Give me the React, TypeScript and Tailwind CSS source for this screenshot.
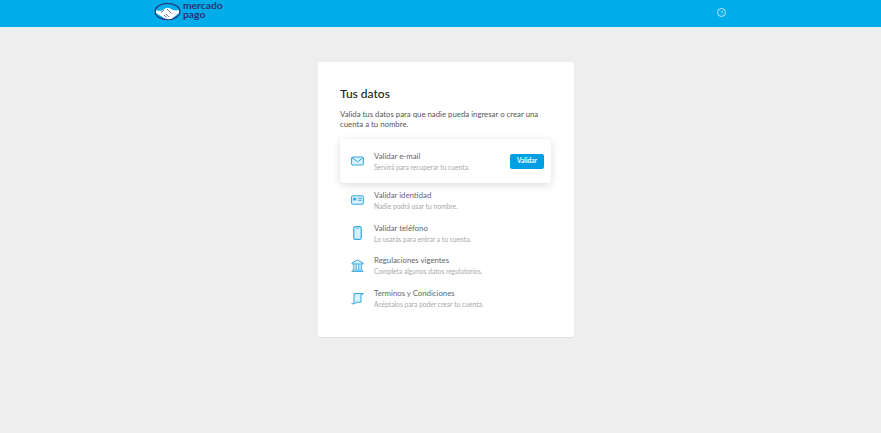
import React from "react";

const font = { fontFamily: 'Lato, "Open Sans", sans-serif' };

function Logo() {
  return (
    <svg width="27" height="19" viewBox="0 0 27 19" fill="none">
      <ellipse cx="13.5" cy="9.5" rx="13" ry="8.8" fill="#2d3277" />
      <ellipse cx="13.5" cy="9.5" rx="11.8" ry="7.6" fill="#00ade9" />
      <path d="M2 8c3 1.5 6 1 9-1.5 2-1 3.5-1 5 0 3 2 6 2.5 9 1.5v3l-7 5.5c-2 1-5 1-7 0L2 11z" fill="#fff" />
      <path d="M10 8l-3 2.5M13 7l4.5 4.5M12 12l3 3M10 13l2.5 2.5" stroke="#2d3277" strokeWidth="0.7" />
    </svg>
  );
}

const stroke = { stroke: "#35a6db", strokeWidth: 1, fill: "none" };

function IconMail() {
  return (
    <svg width="13" height="10" viewBox="0 0 13 10">
      <rect x="0.6" y="1" width="11.8" height="8" rx="1" fill="#d9f1fb" stroke="#35a6db" strokeWidth="1" />
      <path d="M1 1.8l5.5 4 5.5-4" {...stroke} />
    </svg>
  );
}
function IconId() {
  return (
    <svg width="13" height="10" viewBox="0 0 13 10">
      <rect x="0.6" y="0.8" width="11.8" height="8.4" rx="0.8" fill="#d9f1fb" stroke="#35a6db" strokeWidth="1" />
      <rect x="2.2" y="2.8" width="3" height="2.6" fill="#35a6db" />
      <path d="M7 3.3h4M7 5.3h4" stroke="#35a6db" strokeWidth="0.9" />
    </svg>
  );
}
function IconPhone() {
  return (
    <svg width="9" height="14" viewBox="0 0 9 14">
      <rect x="0.8" y="0.7" width="7.4" height="12.6" rx="1.6" fill="#d9f1fb" stroke="#35a6db" strokeWidth="1.2" />
      <path d="M3.4 2.4h2.2" stroke="#35a6db" strokeWidth="0.8" />
    </svg>
  );
}
function IconBank() {
  return (
    <svg width="13" height="13" viewBox="0 0 13 13">
      <path d="M6.5 1L1 4v1h11V4z" fill="#d9f1fb" stroke="#35a6db" strokeWidth="1" />
      <path d="M2.8 5.5v5M5.2 5.5v5M7.8 5.5v5M10.2 5.5v5" stroke="#35a6db" strokeWidth="1.1" />
      <path d="M1.2 11h10.6M0.5 12.4h12" stroke="#35a6db" strokeWidth="1" />
    </svg>
  );
}
function IconTerms() {
  return (
    <svg width="13" height="13" viewBox="0 0 13 13">
      <path d="M3 1.2h7v8.6H3z" fill="#d9f1fb" />
      <path d="M3 1.6h9.4L11 3.2M3 1.6V10.2c0 .9-.6 1.5-1.4 1.5H.5M10 1.8v8.4H5c0 .8-.5 1.5-1.2 1.5H1.6" {...stroke} />
    </svg>
  );
}

const rows = [
  { icon: <IconId />, title: "Validar identidad", sub: "Nadie podrá usar tu nombre." },
  { icon: <IconPhone />, title: "Validar teléfono", sub: "Lo usarás para entrar a tu cuenta." },
  { icon: <IconBank />, title: "Regulaciones vigentes", sub: "Completa algunos datos regulatorios." },
  { icon: <IconTerms />, title: "Terminos y Condiciones", sub: "Acéptalos para poder crear tu cuenta." },
];

function RowText({ title, sub }: { title: string; sub: string }) {
  return (
    <div className="flex flex-col">
      <div className="text-[7.8px] leading-[11px] text-[#666]">{title}</div>
      <div className="text-[6.7px] leading-[10px] text-[#a8a8a8]">{sub}</div>
    </div>
  );
}

export default function App() {
  return (
    <div className="h-[433px] w-[881px] overflow-hidden bg-[#eeeeee]" style={font}>
      <header className="flex h-[27px] items-start justify-between bg-[#00ade9] pl-[154px] pr-[155px]">
        <div className="flex items-start gap-[2px]">
          <div className="mt-[2px]"><Logo /></div>
          <div className="pt-[1px] text-[10.3px] font-bold leading-[8.5px] text-[#2d3277]">
            mercado
            <div>pago</div>
          </div>
        </div>
        <div className="mt-[8px] flex h-[9px] w-[9px] items-center justify-center rounded-full border border-[#bfe9f9] text-[6px] leading-none text-[#d9f3fc]">?</div>
      </header>
      <main className="pl-[318px] pt-[35px]">
        <section className="h-[275px] w-[256px] rounded-[2px] bg-white px-[22px] pt-[24px] shadow-[0_1px_1px_rgba(0,0,0,0.06)]">
          <h1 className="text-[12px] font-medium leading-[16px] text-[#222]">Tus datos</h1>
          <p className="mt-[7px] text-[7.8px] leading-[10px] text-[#555]">
            Valida tus datos para que nadie pueda ingresar o crear una cuenta a tu nombre.
          </p>
          <div className="mt-[10px] flex h-[44px] w-[211px] items-center rounded-[3px] bg-white pr-[7px] shadow-[0_2px_8px_rgba(0,0,0,0.14)]">
            <div className="flex w-[34px] justify-center"><IconMail /></div>
            <div className="flex-1 pt-[1px]"><RowText title="Validar e-mail" sub="Servirá para recuperar tu cuenta." /></div>
            <button className="h-[15px] w-[34px] rounded-[2px] bg-[#009ee3] text-[6.5px] font-bold leading-none text-white">Validar</button>
          </div>
          <div className="mt-[1px] flex flex-col">
            {rows.map((r) => (
              <div key={r.title} className="flex h-[32.7px] items-center">
                <div className="flex w-[34px] justify-center">{r.icon}</div>
                <RowText title={r.title} sub={r.sub} />
              </div>
            ))}
          </div>
        </section>
      </main>
    </div>
  );
}
